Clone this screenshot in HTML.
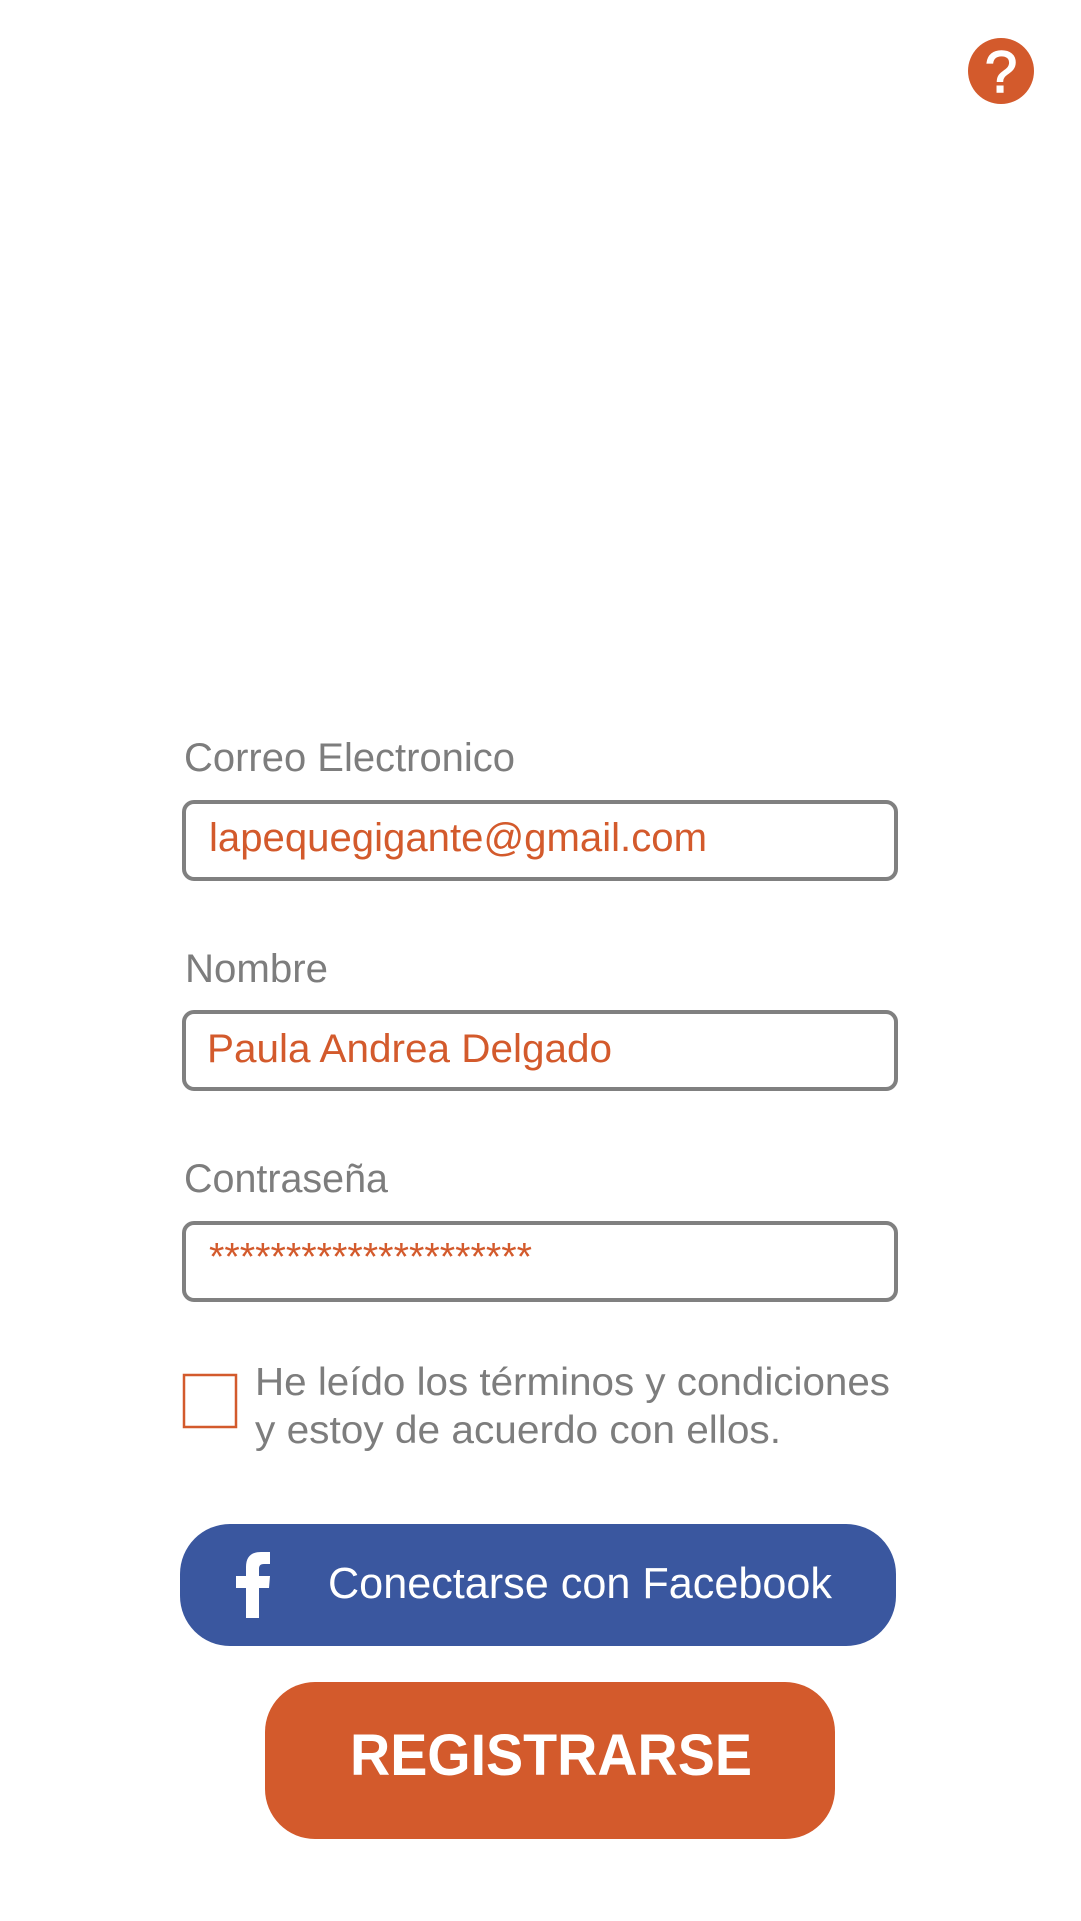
<!DOCTYPE html>
<html><head><meta charset="utf-8"><style>html,body{margin:0;padding:0;background:#fff;}svg{display:block;}</style></head>
<body>
<svg width="1081" height="1921" viewBox="0 0 1081 1921" xmlns="http://www.w3.org/2000/svg" font-family="Liberation Sans, Arial, sans-serif">
<rect width="1081" height="1921" fill="#fff"/>
<circle cx="1001" cy="71" r="33" fill="#d35a2c"/>
<text x="1001" y="92" font-size="58" fill="#fff" stroke="#fff" stroke-width="1.5" text-anchor="middle">?</text>

<text x="184" y="771" font-size="40" fill="#7d7d7d" textLength="331" lengthAdjust="spacingAndGlyphs">Correo Electronico</text>
<rect x="184" y="802" width="712" height="77" rx="10" fill="none" stroke="#808080" stroke-width="4"/>
<text x="209" y="851" font-size="40" fill="#d35a2c" textLength="498" lengthAdjust="spacingAndGlyphs">lapequegigante@gmail.com</text>

<text x="185" y="982" font-size="40" fill="#7d7d7d" textLength="143" lengthAdjust="spacingAndGlyphs">Nombre</text>
<rect x="184" y="1012" width="712" height="77" rx="10" fill="none" stroke="#808080" stroke-width="4"/>
<text x="207" y="1062" font-size="40" fill="#d35a2c" textLength="405" lengthAdjust="spacingAndGlyphs">Paula Andrea Delgado</text>

<text x="184" y="1192" font-size="40" fill="#7d7d7d" textLength="204" lengthAdjust="spacingAndGlyphs">Contraseña</text>
<rect x="184" y="1223" width="712" height="77" rx="10" fill="none" stroke="#808080" stroke-width="4"/>
<text x="209" y="1270" font-size="39" fill="#d35a2c" textLength="323" lengthAdjust="spacingAndGlyphs">*********************</text>

<rect x="184" y="1375" width="52" height="52" fill="none" stroke="#d35a2c" stroke-width="2.5"/>
<text x="255" y="1395" font-size="39" fill="#7d7d7d" textLength="635" lengthAdjust="spacingAndGlyphs">He leído los términos y condiciones</text>
<text x="255" y="1443" font-size="39" fill="#7d7d7d" textLength="526" lengthAdjust="spacingAndGlyphs">y estoy de acuerdo con ellos.</text>

<rect x="180" y="1524" width="716" height="122" rx="50" fill="#3a579f"/>
<path transform="translate(236,1552)" fill="#fff" d="M10 66 V36 H0 V24 H10 V15 C10 5 15 0 25 0 H34 V12 H28 C24 12 23 14 23 17 V24 H34 L33 36 H23 V66 Z"/>
<text x="328" y="1598" font-size="44" fill="#fff" textLength="504" lengthAdjust="spacingAndGlyphs">Conectarse con Facebook</text>

<rect x="265" y="1682" width="570" height="157" rx="50" fill="#d35a2c"/>
<text x="350" y="1775" font-size="58" font-weight="bold" fill="#fff" textLength="402" lengthAdjust="spacingAndGlyphs">REGISTRARSE</text>
</svg>
</body></html>
